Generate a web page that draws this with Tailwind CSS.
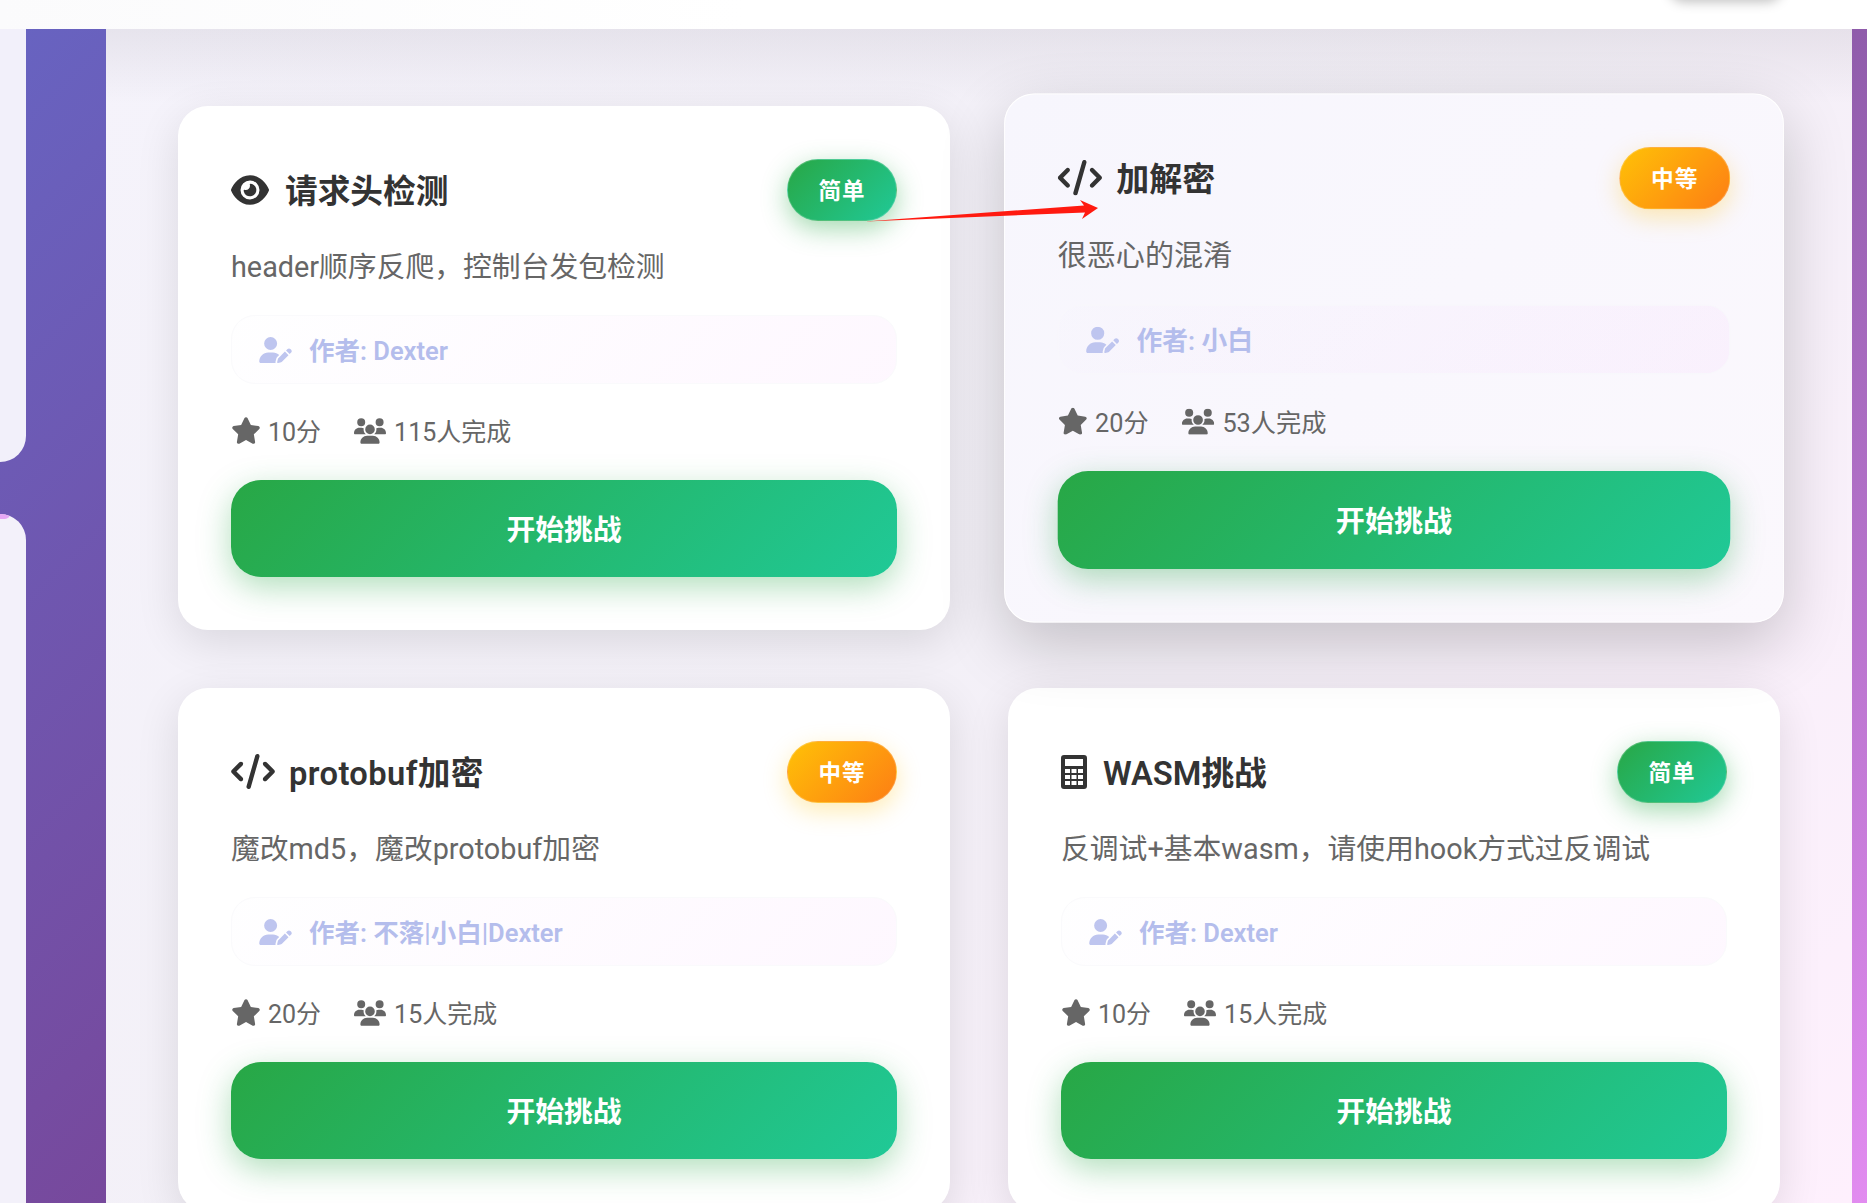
<!DOCTYPE html>
<html lang="zh-CN">
<head>
  <meta charset="UTF-8" />
  <meta name="viewport" content="width=device-width, initial-scale=1.0"/>
  <title>挑战列表</title>
  <script src="https://cdn.jsdelivr.net/npm/@tailwindcss/browser@4"></script>
</head>
<body class="font-['Roboto','Noto_Sans_CJK_SC',sans-serif]">
  <div class="relative h-[1203px] w-[1867px] overflow-hidden flex flex-col bg-[linear-gradient(135deg,#6764c2_0%,#78479a_45%,#8c5aa8_60%,#e28cf0_100%)]">

    <!-- top bar -->
    <div class="relative z-10 h-[29px] shrink-0 overflow-hidden bg-[linear-gradient(90deg,#fbfbfc,#ffffff_40%)]">
      <div class="absolute right-[85px] top-[-30px] h-[30px] w-[113px] rounded-full shadow-[0_2px_12px_rgba(0,0,0,0.25)]"></div>
    </div>

    <div class="flex flex-1 min-h-0">
      <!-- sidebar edge -->
      <div class="w-[26px] shrink-0 flex flex-col gap-[52px]">
        <div class="h-[433px] rounded-br-[26px] bg-[#f2f0fa]"></div>
        <div class="relative flex-1 overflow-hidden rounded-tr-[26px] bg-[#f3f1fa]">
          <div class="h-[5px] w-[10px] rounded-br-[6px] bg-[#e6a8f4]"></div>
        </div>
      </div>
      <div class="w-[80px] shrink-0"></div>

      <!-- main panel -->
      <div class="w-[1746px] shrink-0 bg-[linear-gradient(180deg,rgba(60,50,70,0.08),rgba(60,50,70,0)_75px),linear-gradient(135deg,#f5f3fb_0%,#f3f0f7_50%,#fef0fd_100%)] pl-[72px] pr-[72px] pt-[77px]">
        <div class="grid grid-cols-[772px_772px] gap-x-[58px] gap-y-[58px]">

          <!-- card 1 -->
          <div class="rounded-[30px] bg-white px-[53px] py-[53px] shadow-[0_12px_44px_rgba(0,0,0,0.11)]">
            <div class="flex h-[62px] items-center justify-between">
              <div class="flex items-center gap-[16px] text-[32.7px] font-semibold text-[#333]">
                <svg class="h-[34px] w-[38px] fill-[#333]" viewBox="0 0 576 512"><path d="M288 32c-80.8 0-145.5 36.8-192.6 80.6C48.6 156 17.3 208 2.5 243.7c-3.3 7.9-3.3 16.7 0 24.6C17.3 304 48.6 356 95.4 399.4C142.5 443.2 207.2 480 288 480s145.5-36.8 192.6-80.6c46.8-43.5 78.1-95.4 93-131.1c3.3-7.9 3.3-16.7 0-24.6c-14.9-35.7-46.2-87.7-93-131.1C433.5 68.8 368.8 32 288 32zM144 256a144 144 0 1 1 288 0 144 144 0 1 1 -288 0zm144-64c0 35.3-28.7 64-64 64c-7.1 0-13.9-1.2-20.3-3.3c-5.5-1.8-11.9 1.6-11.7 7.4c.3 6.9 1.3 13.8 3.2 20.7c13.7 51.2 66.4 81.6 117.6 67.9s81.6-66.4 67.9-117.6c-11.1-41.5-47.8-69.4-88.6-71.1c-5.8-.2-9.2 6.1-7.4 11.7c2.1 6.4 3.3 13.2 3.3 20.3z"/></svg>
                <span class="pt-[6px]">请求头检测</span>
              </div>
              <span class="flex h-[62px] w-[110px] items-center justify-center rounded-full border border-white/20 bg-[linear-gradient(135deg,#28a745,#20c997)] pt-[3px] text-[22.5px] font-bold tracking-[1px] text-white shadow-[0_8px_26px_rgba(40,167,69,0.42)]">简单</span>
            </div>
            <p class="mt-[23px] text-[28.8px] leading-[46px] text-[#666]">header顺序反爬，控制台发包检测</p>
            <div class="mt-[25px] flex h-[69px] items-center gap-[17px] rounded-[24px] border border-[#fafafc] bg-[linear-gradient(135deg,rgba(102,126,234,0.005),rgba(240,147,251,0.07))] pl-[27px] text-[25.5px] font-semibold text-[#b4bdec]">
              <svg class="h-[26px] w-[33px] fill-[#bec5ef]" viewBox="0 0 640 512"><path d="M224 256A128 128 0 1 0 224 0a128 128 0 1 0 0 256zm-45.7 48C79.8 304 0 383.8 0 482.3C0 498.7 13.3 512 29.7 512H322.8c-3.1-8.8-3.7-18.4-1.4-27.8l15-60.1c2.8-11.3 8.6-21.5 16.8-29.7l40.3-40.3c-32.1-31-75.7-50.1-123.9-50.1H178.3zm435.5-68.3c-15.6-15.6-40.9-15.6-56.6 0l-29.4 29.4 71 71 29.4-29.4c15.6-15.6 15.6-40.9 0-56.6l-14.4-14.4zM375.9 417c-4.1 4.1-7 9.2-8.4 14.9l-15 60.1c-1.4 5.5 .2 11.2 4.2 15.2s9.7 5.6 15.2 4.2l60.1-15c5.6-1.4 10.8-4.3 14.9-8.4L576.1 358.7l-71-71L375.9 417z"/></svg>
              <span class="pt-[3px]">作者: Dexter</span>
            </div>
            <div class="mt-[31px] flex h-[36px] items-center gap-[33px] text-[25px] text-[#666]">
              <span class="flex items-center gap-[7px]"><svg class="h-[27px] w-[30px] -translate-y-[3px] fill-[#666]" viewBox="0 0 576 512"><path d="M316.9 18C311.6 7 300.4 0 288.1 0s-23.4 7-28.8 18L195 150.3 51.4 171.5c-12 1.8-22 10.2-25.7 21.7s-.7 24.2 7.9 32.7L137.8 329 113.2 474.7c-2 12 3 24.2 12.9 31.3s23 8 33.8 2.3l128.3-68.5 128.3 68.5c10.8 5.7 23.9 4.9 33.8-2.3s14.9-19.3 12.9-31.3L438.5 329 542.7 225.9c8.6-8.5 11.7-21.2 7.9-32.7s-13.7-19.9-25.7-21.7L381.2 150.3 316.9 18z"/></svg>10分</span>
              <span class="flex items-center gap-[8px]"><svg class="h-[26px] w-[32px] -translate-y-[2px] fill-[#666]" viewBox="0 0 640 512"><path d="M144 0a80 80 0 1 1 0 160A80 80 0 1 1 144 0zM512 0a80 80 0 1 1 0 160A80 80 0 1 1 512 0zM0 298.7C0 239.8 47.8 192 106.7 192h42.7c15.9 0 31 3.5 44.6 9.7c-1.3 7.2-1.9 14.7-1.9 22.3c0 38.2 16.8 72.5 43.3 96c-.2 0-.4 0-.7 0H21.3C9.6 320 0 310.4 0 298.7zM405.3 320c-.2 0-.4 0-.7 0c26.6-23.5 43.3-57.8 43.3-96c0-7.6-.7-15-1.9-22.3c13.6-6.3 28.7-9.7 44.6-9.7h42.7C592.2 192 640 239.8 640 298.7c0 11.8-9.6 21.3-21.3 21.3H405.3zM224 224a96 96 0 1 1 192 0 96 96 0 1 1 -192 0zM128 485.3C128 411.7 187.7 352 261.3 352H378.7C452.3 352 512 411.7 512 485.3c0 14.7-11.9 26.7-26.7 26.7H154.7c-14.7 0-26.7-11.9-26.7-26.7z"/></svg>115人完成</span>
            </div>
            <button class="mt-[29px] h-[97px] w-full rounded-[30px] bg-[linear-gradient(135deg,#28a745,#20c997)] pt-[5px] text-[28.8px] font-bold text-white shadow-[0_10px_32px_rgba(40,167,69,0.36)]">开始挑战</button>
          </div>

          <!-- card 2, hovered in the screenshot -->
          <div class="-translate-y-[10px] scale-[1.01] rounded-[30px] border border-white bg-[linear-gradient(135deg,#f7f6fd,#fbf8fd)] px-[52px] py-[52px] shadow-[0_22px_64px_rgba(0,0,0,0.2)]">
            <div class="flex h-[62px] items-center justify-between">
              <div class="flex items-center gap-[14px] text-[32.7px] font-semibold text-[#333]">
                <svg class="h-[35px] w-[44px] fill-[#333]" viewBox="0 0 640 512"><path d="M392.8 1.2c-17-4.9-34.7 5-39.6 22l-128 448c-4.9 17 5 34.7 22 39.6s34.7-5 39.6-22l128-448c4.9-17-5-34.7-22-39.6zm80.6 120.1c-12.5 12.5-12.5 32.8 0 45.3L562.7 256l-89.4 89.4c-12.5 12.5-12.5 32.8 0 45.3s32.8 12.5 45.3 0l112-112c12.5-12.5 12.5-32.8 0-45.3l-112-112c-12.5-12.5-32.8-12.5-45.3 0zm-306.7 0c-12.5-12.5-32.8-12.5-45.3 0l-112 112c-12.5 12.5-12.5 32.8 0 45.3l112 112c12.5 12.5 32.8 12.5 45.3 0s12.5-32.8 0-45.3L77.3 256l89.4-89.4c12.5-12.5 12.5-32.8 0-45.3z"/></svg>
                <span class="pt-[6px]">加解密</span>
              </div>
              <span class="flex h-[62px] w-[110px] items-center justify-center rounded-full border border-white/20 bg-[linear-gradient(135deg,#ffc107,#fd7e14)] pt-[3px] text-[22.5px] font-bold tracking-[1px] text-white shadow-[0_8px_24px_rgba(255,193,7,0.3)]">中等</span>
            </div>
            <p class="mt-[23px] text-[28.8px] leading-[46px] text-[#666]">很恶心的混淆</p>
            <div class="mt-[25px] flex h-[69px] items-center gap-[17px] rounded-[24px] border border-[#f8f7fc] bg-[linear-gradient(135deg,rgba(102,126,234,0.005),rgba(240,147,251,0.07))] pl-[27px] text-[25.5px] font-semibold text-[#b4bdec]">
              <svg class="h-[26px] w-[33px] fill-[#bec5ef]" viewBox="0 0 640 512"><path d="M224 256A128 128 0 1 0 224 0a128 128 0 1 0 0 256zm-45.7 48C79.8 304 0 383.8 0 482.3C0 498.7 13.3 512 29.7 512H322.8c-3.1-8.8-3.7-18.4-1.4-27.8l15-60.1c2.8-11.3 8.6-21.5 16.8-29.7l40.3-40.3c-32.1-31-75.7-50.1-123.9-50.1H178.3zm435.5-68.3c-15.6-15.6-40.9-15.6-56.6 0l-29.4 29.4 71 71 29.4-29.4c15.6-15.6 15.6-40.9 0-56.6l-14.4-14.4zM375.9 417c-4.1 4.1-7 9.2-8.4 14.9l-15 60.1c-1.4 5.5 .2 11.2 4.2 15.2s9.7 5.6 15.2 4.2l60.1-15c5.6-1.4 10.8-4.3 14.9-8.4L576.1 358.7l-71-71L375.9 417z"/></svg>
              <span class="pt-[3px]">作者: 小白</span>
            </div>
            <div class="mt-[31px] flex h-[36px] items-center gap-[33px] text-[25px] text-[#666]">
              <span class="flex items-center gap-[7px]"><svg class="h-[27px] w-[30px] -translate-y-[3px] fill-[#666]" viewBox="0 0 576 512"><path d="M316.9 18C311.6 7 300.4 0 288.1 0s-23.4 7-28.8 18L195 150.3 51.4 171.5c-12 1.8-22 10.2-25.7 21.7s-.7 24.2 7.9 32.7L137.8 329 113.2 474.7c-2 12 3 24.2 12.9 31.3s23 8 33.8 2.3l128.3-68.5 128.3 68.5c10.8 5.7 23.9 4.9 33.8-2.3s14.9-19.3 12.9-31.3L438.5 329 542.7 225.9c8.6-8.5 11.7-21.2 7.9-32.7s-13.7-19.9-25.7-21.7L381.2 150.3 316.9 18z"/></svg>20分</span>
              <span class="flex items-center gap-[8px]"><svg class="h-[26px] w-[32px] -translate-y-[2px] fill-[#666]" viewBox="0 0 640 512"><path d="M144 0a80 80 0 1 1 0 160A80 80 0 1 1 144 0zM512 0a80 80 0 1 1 0 160A80 80 0 1 1 512 0zM0 298.7C0 239.8 47.8 192 106.7 192h42.7c15.9 0 31 3.5 44.6 9.7c-1.3 7.2-1.9 14.7-1.9 22.3c0 38.2 16.8 72.5 43.3 96c-.2 0-.4 0-.7 0H21.3C9.6 320 0 310.4 0 298.7zM405.3 320c-.2 0-.4 0-.7 0c26.6-23.5 43.3-57.8 43.3-96c0-7.6-.7-15-1.9-22.3c13.6-6.3 28.7-9.7 44.6-9.7h42.7C592.2 192 640 239.8 640 298.7c0 11.8-9.6 21.3-21.3 21.3H405.3zM224 224a96 96 0 1 1 192 0 96 96 0 1 1 -192 0zM128 485.3C128 411.7 187.7 352 261.3 352H378.7C452.3 352 512 411.7 512 485.3c0 14.7-11.9 26.7-26.7 26.7H154.7c-14.7 0-26.7-11.9-26.7-26.7z"/></svg>53人完成</span>
            </div>
            <button class="mt-[29px] h-[97px] w-full rounded-[30px] bg-[linear-gradient(135deg,#28a745,#20c997)] pt-[5px] text-[28.8px] font-bold text-white shadow-[0_10px_32px_rgba(40,167,69,0.36)]">开始挑战</button>
          </div>

          <!-- card 3 -->
          <div class="rounded-[30px] bg-white px-[53px] py-[53px] shadow-[0_12px_44px_rgba(0,0,0,0.11)]">
            <div class="flex h-[62px] items-center justify-between">
              <div class="flex items-center gap-[14px] text-[32.7px] font-semibold text-[#333]">
                <svg class="h-[35px] w-[44px] fill-[#333]" viewBox="0 0 640 512"><path d="M392.8 1.2c-17-4.9-34.7 5-39.6 22l-128 448c-4.9 17 5 34.7 22 39.6s34.7-5 39.6-22l128-448c4.9-17-5-34.7-22-39.6zm80.6 120.1c-12.5 12.5-12.5 32.8 0 45.3L562.7 256l-89.4 89.4c-12.5 12.5-12.5 32.8 0 45.3s32.8 12.5 45.3 0l112-112c12.5-12.5 12.5-32.8 0-45.3l-112-112c-12.5-12.5-32.8-12.5-45.3 0zm-306.7 0c-12.5-12.5-32.8-12.5-45.3 0l-112 112c-12.5 12.5-12.5 32.8 0 45.3l112 112c12.5 12.5 32.8 12.5 45.3 0s12.5-32.8 0-45.3L77.3 256l89.4-89.4c12.5-12.5 12.5-32.8 0-45.3z"/></svg>
                <span class="pt-[6px] tracking-[0.4px]">protobuf加密</span>
              </div>
              <span class="flex h-[62px] w-[110px] items-center justify-center rounded-full border border-white/20 bg-[linear-gradient(135deg,#ffc107,#fd7e14)] pt-[3px] text-[22.5px] font-bold tracking-[1px] text-white shadow-[0_8px_24px_rgba(255,193,7,0.3)]">中等</span>
            </div>
            <p class="mt-[23px] text-[28.8px] leading-[46px] text-[#666]">魔改md5，魔改protobuf加密</p>
            <div class="mt-[25px] flex h-[69px] items-center gap-[17px] rounded-[24px] border border-[#fafafc] bg-[linear-gradient(135deg,rgba(102,126,234,0.005),rgba(240,147,251,0.07))] pl-[27px] text-[25.5px] font-semibold text-[#b4bdec]">
              <svg class="h-[26px] w-[33px] fill-[#bec5ef]" viewBox="0 0 640 512"><path d="M224 256A128 128 0 1 0 224 0a128 128 0 1 0 0 256zm-45.7 48C79.8 304 0 383.8 0 482.3C0 498.7 13.3 512 29.7 512H322.8c-3.1-8.8-3.7-18.4-1.4-27.8l15-60.1c2.8-11.3 8.6-21.5 16.8-29.7l40.3-40.3c-32.1-31-75.7-50.1-123.9-50.1H178.3zm435.5-68.3c-15.6-15.6-40.9-15.6-56.6 0l-29.4 29.4 71 71 29.4-29.4c15.6-15.6 15.6-40.9 0-56.6l-14.4-14.4zM375.9 417c-4.1 4.1-7 9.2-8.4 14.9l-15 60.1c-1.4 5.5 .2 11.2 4.2 15.2s9.7 5.6 15.2 4.2l60.1-15c5.6-1.4 10.8-4.3 14.9-8.4L576.1 358.7l-71-71L375.9 417z"/></svg>
              <span class="pt-[3px]">作者: 不落|小白|Dexter</span>
            </div>
            <div class="mt-[31px] flex h-[36px] items-center gap-[33px] text-[25px] text-[#666]">
              <span class="flex items-center gap-[7px]"><svg class="h-[27px] w-[30px] -translate-y-[3px] fill-[#666]" viewBox="0 0 576 512"><path d="M316.9 18C311.6 7 300.4 0 288.1 0s-23.4 7-28.8 18L195 150.3 51.4 171.5c-12 1.8-22 10.2-25.7 21.7s-.7 24.2 7.9 32.7L137.8 329 113.2 474.7c-2 12 3 24.2 12.9 31.3s23 8 33.8 2.3l128.3-68.5 128.3 68.5c10.8 5.7 23.9 4.9 33.8-2.3s14.9-19.3 12.9-31.3L438.5 329 542.7 225.9c8.6-8.5 11.7-21.2 7.9-32.7s-13.7-19.9-25.7-21.7L381.2 150.3 316.9 18z"/></svg>20分</span>
              <span class="flex items-center gap-[8px]"><svg class="h-[26px] w-[32px] -translate-y-[2px] fill-[#666]" viewBox="0 0 640 512"><path d="M144 0a80 80 0 1 1 0 160A80 80 0 1 1 144 0zM512 0a80 80 0 1 1 0 160A80 80 0 1 1 512 0zM0 298.7C0 239.8 47.8 192 106.7 192h42.7c15.9 0 31 3.5 44.6 9.7c-1.3 7.2-1.9 14.7-1.9 22.3c0 38.2 16.8 72.5 43.3 96c-.2 0-.4 0-.7 0H21.3C9.6 320 0 310.4 0 298.7zM405.3 320c-.2 0-.4 0-.7 0c26.6-23.5 43.3-57.8 43.3-96c0-7.6-.7-15-1.9-22.3c13.6-6.3 28.7-9.7 44.6-9.7h42.7C592.2 192 640 239.8 640 298.7c0 11.8-9.6 21.3-21.3 21.3H405.3zM224 224a96 96 0 1 1 192 0 96 96 0 1 1 -192 0zM128 485.3C128 411.7 187.7 352 261.3 352H378.7C452.3 352 512 411.7 512 485.3c0 14.7-11.9 26.7-26.7 26.7H154.7c-14.7 0-26.7-11.9-26.7-26.7z"/></svg>15人完成</span>
            </div>
            <button class="mt-[29px] h-[97px] w-full rounded-[30px] bg-[linear-gradient(135deg,#28a745,#20c997)] pt-[5px] text-[28.8px] font-bold text-white shadow-[0_10px_32px_rgba(40,167,69,0.36)]">开始挑战</button>
          </div>

          <!-- card 4 -->
          <div class="rounded-[30px] bg-white px-[53px] py-[53px] shadow-[0_12px_44px_rgba(0,0,0,0.11)]">
            <div class="flex h-[62px] items-center justify-between">
              <div class="flex items-center gap-[16px] text-[32.7px] font-semibold text-[#333]">
                <svg class="h-[34px] w-[26px] fill-[#333]" viewBox="0 0 26 34"><path fill-rule="evenodd" d="M3 0h20a3 3 0 0 1 3 3v28a3 3 0 0 1-3 3H3a3 3 0 0 1-3-3V3a3 3 0 0 1 3-3zM4 4v7h18V4zM4 14v4h5v-4zM10.5 14v4h5v-4zM17 14v4h5v-4zM4 20v4h5v-4zM10.5 20v4h5v-4zM17 20v4h5v-4zM4 26v4h5v-4zM10.5 26v4h5v-4zM17 26v4h5v-4z"/></svg>
                <span class="pt-[6px]">WASM挑战</span>
              </div>
              <span class="flex h-[62px] w-[110px] items-center justify-center rounded-full border border-white/20 bg-[linear-gradient(135deg,#28a745,#20c997)] pt-[3px] text-[22.5px] font-bold tracking-[1px] text-white shadow-[0_8px_26px_rgba(40,167,69,0.42)]">简单</span>
            </div>
            <p class="mt-[23px] text-[28.8px] leading-[46px] text-[#666]">反调试+基本wasm，请使用hook方式过反调试</p>
            <div class="mt-[25px] flex h-[69px] items-center gap-[17px] rounded-[24px] border border-[#fafafc] bg-[linear-gradient(135deg,rgba(102,126,234,0.005),rgba(240,147,251,0.07))] pl-[27px] text-[25.5px] font-semibold text-[#b4bdec]">
              <svg class="h-[26px] w-[33px] fill-[#bec5ef]" viewBox="0 0 640 512"><path d="M224 256A128 128 0 1 0 224 0a128 128 0 1 0 0 256zm-45.7 48C79.8 304 0 383.8 0 482.3C0 498.7 13.3 512 29.7 512H322.8c-3.1-8.8-3.7-18.4-1.4-27.8l15-60.1c2.8-11.3 8.6-21.5 16.8-29.7l40.3-40.3c-32.1-31-75.7-50.1-123.9-50.1H178.3zm435.5-68.3c-15.6-15.6-40.9-15.6-56.6 0l-29.4 29.4 71 71 29.4-29.4c15.6-15.6 15.6-40.9 0-56.6l-14.4-14.4zM375.9 417c-4.1 4.1-7 9.2-8.4 14.9l-15 60.1c-1.4 5.5 .2 11.2 4.2 15.2s9.7 5.6 15.2 4.2l60.1-15c5.6-1.4 10.8-4.3 14.9-8.4L576.1 358.7l-71-71L375.9 417z"/></svg>
              <span class="pt-[3px]">作者: Dexter</span>
            </div>
            <div class="mt-[31px] flex h-[36px] items-center gap-[33px] text-[25px] text-[#666]">
              <span class="flex items-center gap-[7px]"><svg class="h-[27px] w-[30px] -translate-y-[3px] fill-[#666]" viewBox="0 0 576 512"><path d="M316.9 18C311.6 7 300.4 0 288.1 0s-23.4 7-28.8 18L195 150.3 51.4 171.5c-12 1.8-22 10.2-25.7 21.7s-.7 24.2 7.9 32.7L137.8 329 113.2 474.7c-2 12 3 24.2 12.9 31.3s23 8 33.8 2.3l128.3-68.5 128.3 68.5c10.8 5.7 23.9 4.9 33.8-2.3s14.9-19.3 12.9-31.3L438.5 329 542.7 225.9c8.6-8.5 11.7-21.2 7.9-32.7s-13.7-19.9-25.7-21.7L381.2 150.3 316.9 18z"/></svg>10分</span>
              <span class="flex items-center gap-[8px]"><svg class="h-[26px] w-[32px] -translate-y-[2px] fill-[#666]" viewBox="0 0 640 512"><path d="M144 0a80 80 0 1 1 0 160A80 80 0 1 1 144 0zM512 0a80 80 0 1 1 0 160A80 80 0 1 1 512 0zM0 298.7C0 239.8 47.8 192 106.7 192h42.7c15.9 0 31 3.5 44.6 9.7c-1.3 7.2-1.9 14.7-1.9 22.3c0 38.2 16.8 72.5 43.3 96c-.2 0-.4 0-.7 0H21.3C9.6 320 0 310.4 0 298.7zM405.3 320c-.2 0-.4 0-.7 0c26.6-23.5 43.3-57.8 43.3-96c0-7.6-.7-15-1.9-22.3c13.6-6.3 28.7-9.7 44.6-9.7h42.7C592.2 192 640 239.8 640 298.7c0 11.8-9.6 21.3-21.3 21.3H405.3zM224 224a96 96 0 1 1 192 0 96 96 0 1 1 -192 0zM128 485.3C128 411.7 187.7 352 261.3 352H378.7C452.3 352 512 411.7 512 485.3c0 14.7-11.9 26.7-26.7 26.7H154.7c-14.7 0-26.7-11.9-26.7-26.7z"/></svg>15人完成</span>
            </div>
            <button class="mt-[29px] h-[97px] w-full rounded-[30px] bg-[linear-gradient(135deg,#28a745,#20c997)] pt-[5px] text-[28.8px] font-bold text-white shadow-[0_10px_32px_rgba(40,167,69,0.36)]">开始挑战</button>
          </div>

        </div>
      </div>
    </div>

    <!-- red annotation arrow drawn over the screenshot -->
    <svg class="absolute left-[860px] top-[195px] z-20 h-[30px] w-[245px]" viewBox="860 195 245 30">
      <polygon fill="#ff1a10" points="865,221.5 1084,205.5 1080,200 1098,208 1082,219 1085,212.5"/>
    </svg>
  </div>
</body>
</html>
